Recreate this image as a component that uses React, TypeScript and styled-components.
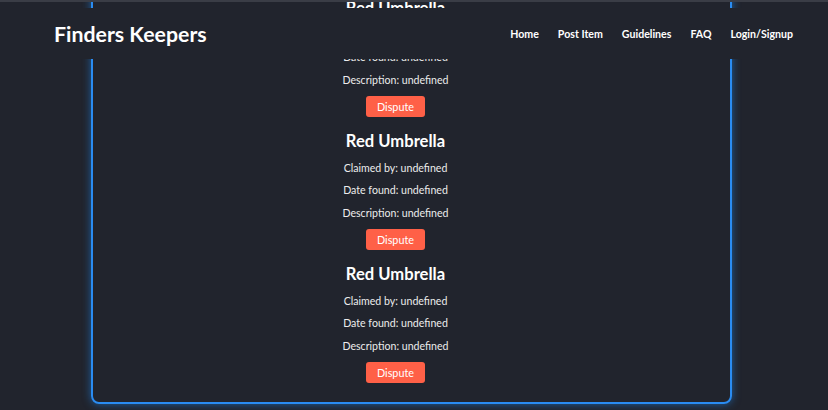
import React, { useLayoutEffect, useRef } from 'react';
import styled, { createGlobalStyle } from 'styled-components';

const GlobalStyle = createGlobalStyle`
  html, body {
    margin: 0;
    padding: 0;
    background: #21242d;
    overflow: hidden;
  }
  body {
    font-family: Lato, "Open Sans", sans-serif;
    color: #f2f2f2;
  }
`;

const Page = styled.div`
  height: 100vh;
  box-sizing: border-box;
  border-top: 2px solid #3a3d46;
  overflow-y: scroll;
  background: #21242d;

  &::-webkit-scrollbar {
    width: 8px;
  }
  &::-webkit-scrollbar-track {
    background: #21242d;
  }
  &::-webkit-scrollbar-thumb {
    background: #2e3240;
    border-radius: 3px;
  }
`;

const NavBar = styled.header`
  position: fixed;
  top: 8px;
  left: 0;
  right: 8px;
  height: 51px;
  display: flex;
  align-items: center;
  justify-content: space-between;
  padding: 0 27px 0 54px;
  background: #21242d;
  z-index: 10;
`;

const Brand = styled.h1`
  margin: 0;
  font-size: 21.3px;
  font-weight: 700;
  color: #ffffff;
`;

const NavLinks = styled.nav`
  display: flex;
  gap: 19px;
`;

const NavLink = styled.a`
  font-size: 10.6px;
  font-weight: 700;
  color: #ffffff;
  text-decoration: none;
  cursor: pointer;
`;

const Card = styled.section`
  margin: 0 96px 6px 91px;
  border: 2px solid #2a8cf2;
  border-radius: 8px;
  box-shadow: 0 0 8px rgba(30, 144, 255, 0.55);
  padding: 0 52px 19px 20px;
`;

const Item = styled.article`
  display: flex;
  flex-direction: column;
  align-items: center;
`;

const ItemTitle = styled.h3`
  margin: 12.5px 0 5px;
  font-size: 16.6px;
  font-weight: 700;
  color: #ffffff;
  line-height: 22px;
`;

const Detail = styled.p`
  margin: 0;
  font-size: 10.6px;
  line-height: 22.5px;
  color: #ececec;
`;

const DisputeButton = styled.button`
  margin-top: 5px;
  height: 21px;
  padding: 0 11px;
  border: none;
  border-radius: 3px;
  background: #ff6047;
  color: #ffffff;
  font-family: inherit;
  font-size: 10.8px;
  cursor: pointer;
`;

interface ClaimedItem {
  id: number;
  name: string;
  claimedBy?: string;
  dateFound?: string;
  description?: string;
}

const items: ClaimedItem[] = Array.from({ length: 27 }, (_, i) => ({
  id: i,
  name: 'Red Umbrella',
}));

const App: React.FC = () => {
  const pageRef = useRef<HTMLDivElement>(null);

  useLayoutEffect(() => {
    const el = pageRef.current;
    if (el) el.scrollTop = el.scrollHeight;
  }, []);

  return (
    <>
      <GlobalStyle />
      <Page ref={pageRef}>
        <NavBar>
          <Brand>Finders Keepers</Brand>
          <NavLinks>
            <NavLink>Home</NavLink>
            <NavLink>Post Item</NavLink>
            <NavLink>Guidelines</NavLink>
            <NavLink>FAQ</NavLink>
            <NavLink>Login/Signup</NavLink>
          </NavLinks>
        </NavBar>
        <Card>
          {items.map((item) => (
            <Item key={item.id}>
              <ItemTitle>{item.name}</ItemTitle>
              <Detail>Claimed by: {String(item.claimedBy)}</Detail>
              <Detail>Date found: {String(item.dateFound)}</Detail>
              <Detail>Description: {String(item.description)}</Detail>
              <DisputeButton>Dispute</DisputeButton>
            </Item>
          ))}
        </Card>
      </Page>
    </>
  );
};

export default App;
